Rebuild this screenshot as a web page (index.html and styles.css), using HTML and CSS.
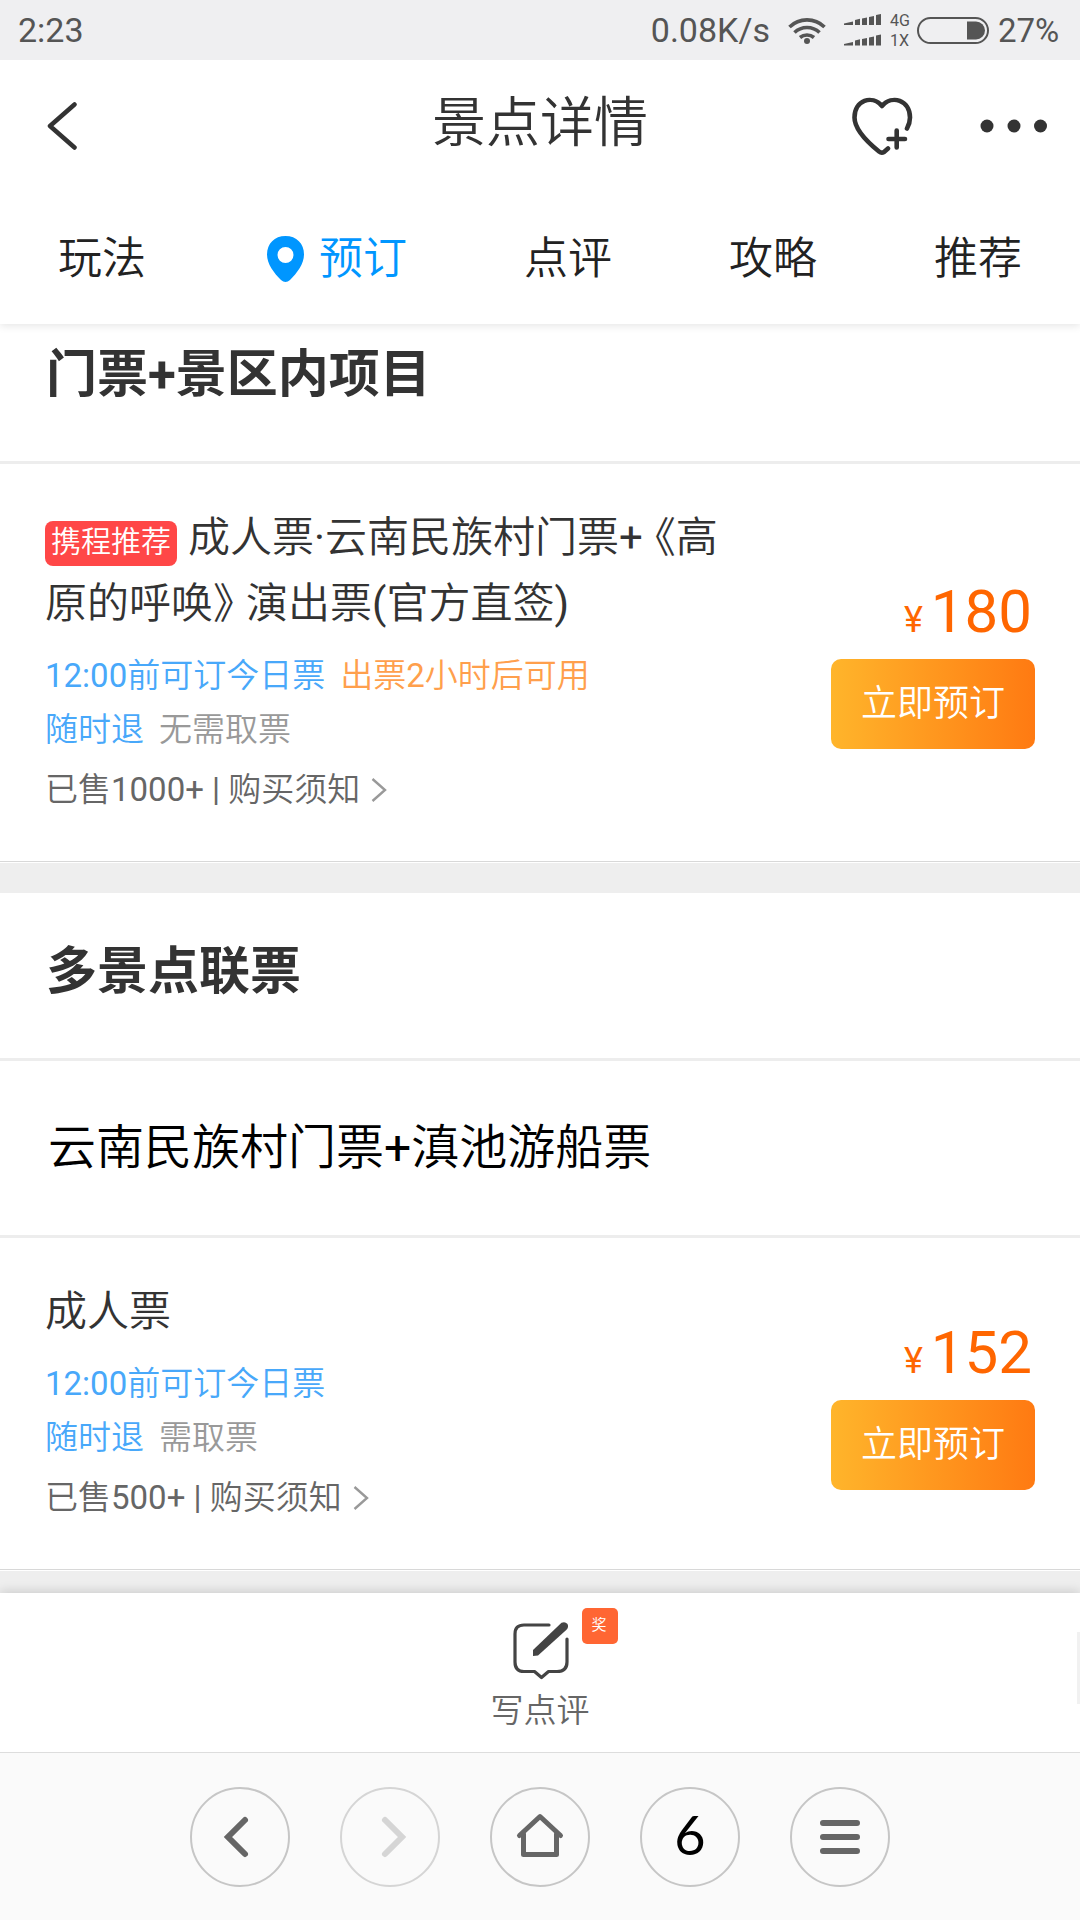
FILE: index.html
```html
<!DOCTYPE html>
<html lang="zh-CN">
<head>
<meta charset="utf-8">
<title>景点详情</title>
<link rel="stylesheet" href="styles.css">
</head>
<body>
<div class="screen">
  <div class="status">
    <span class="clock">2:23</span>
    <span class="speed">0.08K/s</span>
    <svg class="wifi" width="38" height="28" viewBox="0 0 38 28" fill="none" stroke="#555" stroke-width="3.6">
      <path d="M1.500 11A25 25 0 0 1 36.500 11"/><path d="M6.500 16.500A18 18 0 0 1 31.500 16.500"/><path d="M12 21.500A11 11 0 0 1 26 21.500"/>
      <circle cx="19" cy="25" r="3" fill="#555" stroke="none"/>
    </svg>
    <svg class="signal" width="38" height="32" viewBox="0 0 38 32" fill="#555">
      <g id="bars"><path d="M0 9.500L9 7.500V11H0z"/><path d="M11 6l5-1.200V11h-5z"/><path d="M18 4.500l5-1V11h-5z"/><path d="M25 3l5-1V11h-5z"/><path d="M32 1l5-1V11h-5z"/></g>
      <use href="#bars" y="20.500"/>
    </svg>
    <span class="net"><span>4G</span><span>1X</span></span>
    <svg class="battery" width="72" height="27" viewBox="0 0 72 27">
      <rect x="1" y="1" width="70" height="25" rx="12.500" fill="none" stroke="#555" stroke-width="2"/>
      <path d="M50 4.500H59A9 9 0 0 1 59 22.500H50z" fill="#555"/>
    </svg>
    <span class="percent">27%</span>
  </div>

  <header class="header">
    <svg class="back" width="31" height="50" viewBox="0 0 31 50" fill="none" stroke="#333" stroke-width="4.500" stroke-linecap="round" stroke-linejoin="round"><path d="M27.500 3.500L3 25L27.500 46.500"/></svg>
    <h1 class="title">景点详情</h1>
    <svg class="heart" width="62" height="60" viewBox="0 0 62 60" fill="none" stroke="#333" stroke-width="4.600" stroke-linecap="round" stroke-linejoin="round">
      <path d="M37 52.500L33 56Q30.500 57.500 28 55.500C15 45 3.500 32 3.500 21.500C3.500 4 21 -1.500 31 10C41 -1.500 59 4 59 21.500Q59 27 56 32.500"/>
      <path d="M37.500 43H54M45.700 34.500V51.500"/>
    </svg>
    <svg class="more" width="68" height="14" viewBox="0 0 68 14" fill="#333"><circle cx="7" cy="7" r="6.500"/><circle cx="34" cy="7" r="6.500"/><circle cx="60.500" cy="7" r="6.500"/></svg>
  </header>

  <nav class="tabs">
    <span>玩法</span>
    <span class="active"><svg class="pin" width="37" height="46" viewBox="0 0 37 46"><path fill="#0096ff" fill-rule="evenodd" d="M18.500 0C7.500 0 0 7.500 0 18.500C0 28 7 37 14 44Q18.500 48 23 44C30 37 37 28 37 18.500C37 7.500 29.500 0 18.500 0zM18.500 11a8 8 0 1 1 0 16a8 8 0 0 1 0-16z"/></svg>预订</span>
    <span>点评</span>
    <span>攻略</span>
    <span>推荐</span>
  </nav>

  <main class="content">
    <h2 class="section section-first">门票+景区内项目</h2>
    <article class="ticket ticket-tall">
      <div class="info">
        <h3 class="name"><span class="tag">携程推荐</span>成人票·云南民族村门票+<span class="open">《</span>高原的呼唤<span class="close">》</span>演出票(官方直签)</h3>
        <p class="meta"><span class="blue">12:00前可订今日票</span><span class="orange">出票2小时后可用</span></p>
        <p class="meta"><span class="blue">随时退</span><span class="gray">无需取票</span></p>
        <p class="sold">已售1000+ | 购买须知<svg class="arrow" width="16" height="26" viewBox="0 0 16 26" fill="none" stroke="#999" stroke-width="2.400"><path d="M1.500 2L14 13L1.500 24"/></svg></p>
      </div>
      <div class="buy">
        <div class="price"><span class="yen">¥</span>180</div>
        <button class="book">立即预订</button>
      </div>
    </article>
    <div class="gap"></div>

    <h2 class="section">多景点联票</h2>
    <div class="product">云南民族村门票+滇池游船票</div>
    <article class="ticket">
      <div class="info">
        <h3 class="name">成人票</h3>
        <p class="meta"><span class="blue">12:00前可订今日票</span></p>
        <p class="meta"><span class="blue">随时退</span><span class="gray">需取票</span></p>
        <p class="sold">已售500+ | 购买须知<svg class="arrow" width="16" height="26" viewBox="0 0 16 26" fill="none" stroke="#999" stroke-width="2.400"><path d="M1.500 2L14 13L1.500 24"/></svg></p>
      </div>
      <div class="buy">
        <div class="price"><span class="yen">¥</span>152</div>
        <button class="book">立即预订</button>
      </div>
    </article>
    <div class="gap gap-last"></div>
  </main>

  <div class="review">
    <svg class="pen" width="58" height="60" viewBox="0 0 58 60" fill="none" stroke="#444" stroke-width="3.200" stroke-linecap="round" stroke-linejoin="round">
      <path d="M37 4H12Q3 4 3 13V41Q3 50.500 12 50.500H22.500L29.500 56.500L36.500 50.500H45Q55 50.500 55 41V18"/>
      <path d="M21 29L49.500 1.800Q53 0 55.500 3Q57 6 54.500 8.700L26 34.500L21 35z" fill="#444" stroke="none"/>
    </svg>
    <span class="award">奖</span>
    <span class="review-label">写点评</span>
    <i class="edge"></i>
  </div>

  <footer class="browser">
    <span class="round"><svg width="98" height="98" viewBox="0 0 98 98" fill="none" stroke="#666" stroke-width="6" stroke-linecap="round"><path d="M54 32L37 49L54 66"/></svg></span>
    <span class="round off"><svg width="98" height="98" viewBox="0 0 98 98" fill="none" stroke="#d5d5d5" stroke-width="6" stroke-linecap="round"><path d="M44 32L61 49L44 66"/></svg></span>
    <span class="round"><svg width="98" height="98" viewBox="0 0 98 98" fill="none" stroke="#666" stroke-width="5" stroke-linecap="round" stroke-linejoin="round"><path d="M28.500 47.500L49 28.500L69.500 47.500M32.500 46V66.500H65.500V46"/></svg></span>
    <span class="round count">6</span>
    <span class="round"><svg width="98" height="98" viewBox="0 0 98 98" fill="none" stroke="#666" stroke-width="6" stroke-linecap="round"><path d="M32 35H66M32 49H66M32 63H66"/></svg></span>
  </footer>
</div>
</body>
</html>
```

FILE: styles.css
```css
* { box-sizing: border-box; margin: 0; padding: 0; }

body {
  width: 1080px;
  height: 1920px;
  overflow: hidden;
  background: #fff;
  color: #333;
  font-family: Roboto, "Noto Sans CJK SC DemiLight", "Noto Sans CJK SC", sans-serif;
  font-weight: 400;
}

.screen { display: flex; flex-direction: column; width: 1080px; height: 1920px; }
svg { display: block; flex: none; }

/* phone status bar */
.status {
  display: flex;
  align-items: center;
  height: 60px;
  padding: 0 18px;
  background: #efeff1;
  color: #555;
  font-size: 34px;
  line-height: 60px;
}
.speed { margin-left: auto; }
.wifi { margin-left: 18px; }
.signal { margin-left: 18px; }
.net { display: flex; flex-direction: column; margin-left: 8px; padding-top: 2px; width: 23px; font-size: 16px; line-height: 20px; }
.battery { margin-left: 4px; }
.percent { width: 64px; margin-left: 9px; padding-top: 1px; font-size: 33px; }

/* page header */
.header { display: flex; align-items: center; height: 132px; padding-left: 47px; }
.title { width: 216px; margin-left: 354px; padding-bottom: 4px; font-size: 54px; font-weight: 400; line-height: 80px; white-space: nowrap; }
.heart { margin-left: 203px; }
.more { margin-left: 67px; }

.tabs {
  position: relative;
  z-index: 1;
  display: flex;
  justify-content: space-between;
  align-items: center;
  height: 132px;
  padding: 2px 58px 0;
  background: #fff;
  box-shadow: 0 2px 8px rgba(0, 0, 0, .1);
  clip-path: inset(0 0 -20px 0);
  color: #222;
  font-size: 44px;
  line-height: 64px;
}
.active { display: flex; align-items: center; color: #0096ff; }
.pin { margin: -1px 15px 0 4px; }

/* ticket list */
.content { flex: 1; min-height: 0; overflow: hidden; }
.section {
  display: flex;
  align-items: center;
  height: 168px;
  padding: 0 45px 17px 46px;
  border-bottom: 3px solid #ededed;
  font-family: Roboto, "Noto Sans CJK SC", sans-serif;
  font-size: 51px;
  font-weight: 700;
}
.section-first { height: 140px; padding-bottom: 45px; }
.product {
  height: 177px;
  padding-left: 48px;
  border-bottom: 3px solid #ededed;
  color: #000;
  font-size: 48px;
  line-height: 174px;
}
.ticket {
  display: flex;
  align-items: center;
  justify-content: space-between;
  height: 332px;
  padding: 0 45px;
  border-bottom: 1px solid #d8d8d8;
}
.ticket-tall { height: 398px; }
.info { align-self: flex-start; width: 690px; padding-top: 41px; }
.name { font-size: 42px; font-weight: 400; line-height: 66px; }
.tag {
  display: inline-block;
  height: 45px;
  margin: 16px 11px 0 0;
  padding: 0 6px;
  border-radius: 8px;
  background: #ff4747;
  color: #fff;
  font-size: 30px;
  line-height: 41px;
  vertical-align: top;
}
.open, .close { font-feature-settings: "halt"; }
.open { margin-left: 12px; }
.close { margin-right: 12px; }
.meta { display: flex; gap: 15px; font-size: 33px; line-height: 54px; }
.name + .meta { margin-top: 12px; }
.blue { color: #48a8fa; }
.orange { color: #ff9f4c; }
.gray { color: #999; }
.sold { display: flex; align-items: center; margin-top: 6px; color: #666; font-size: 33px; line-height: 54px; }
.arrow { margin-left: 11px; }

.price { margin-bottom: 12px; padding-right: 3px; color: #ff6600; font-size: 60px; line-height: 71px; text-align: right; }
.yen { margin-right: 8px; font-size: 36px; line-height: 1; }
.book {
  display: block;
  width: 204px;
  height: 90px;
  border: 0;
  border-radius: 10px;
  background: linear-gradient(90deg, #ffb52b, #ff7a12);
  color: #fff;
  font: inherit;
  font-size: 36px;
  line-height: 90px;
}
.gap { height: 31px; border-top: 1px solid #fff; background: #eee; }

/* write-a-review bar */
.review {
  position: relative;
  display: flex;
  flex-direction: column;
  align-items: center;
  height: 160px;
  padding-top: 28px;
  border-bottom: 1px solid #ddd;
  background: #fff;
  box-shadow: 0 -2px 10px rgba(0, 0, 0, .14);
  clip-path: inset(-20px 0 0 0);
}
.pen { margin-left: 2px; }
.award {
  position: absolute;
  left: 582px;
  top: 15px;
  width: 36px;
  height: 36px;
  padding-right: 2px;
  border-radius: 5px;
  background: #ff6633;
  color: #fff;
  font-size: 15px;
  line-height: 34px;
  text-align: center;
}
.review-label { margin-top: 4px; color: #666; font-size: 33px; line-height: 52px; }
.edge { position: absolute; right: 0; top: 39px; width: 3px; height: 72px; background: #f1f1f1; }

/* browser toolbar */
.browser { display: flex; justify-content: center; gap: 50px; height: 167px; padding-top: 34px; background: #fafafa; }
.round { display: flex; align-items: center; justify-content: center; width: 100px; height: 100px; border: 2px solid #c6c6c6; border-radius: 50%; }
.off { border-color: #d5d5d5; }
.count { padding-bottom: 5px; color: #000; font-family: Lato, sans-serif; font-size: 54px; }
```
